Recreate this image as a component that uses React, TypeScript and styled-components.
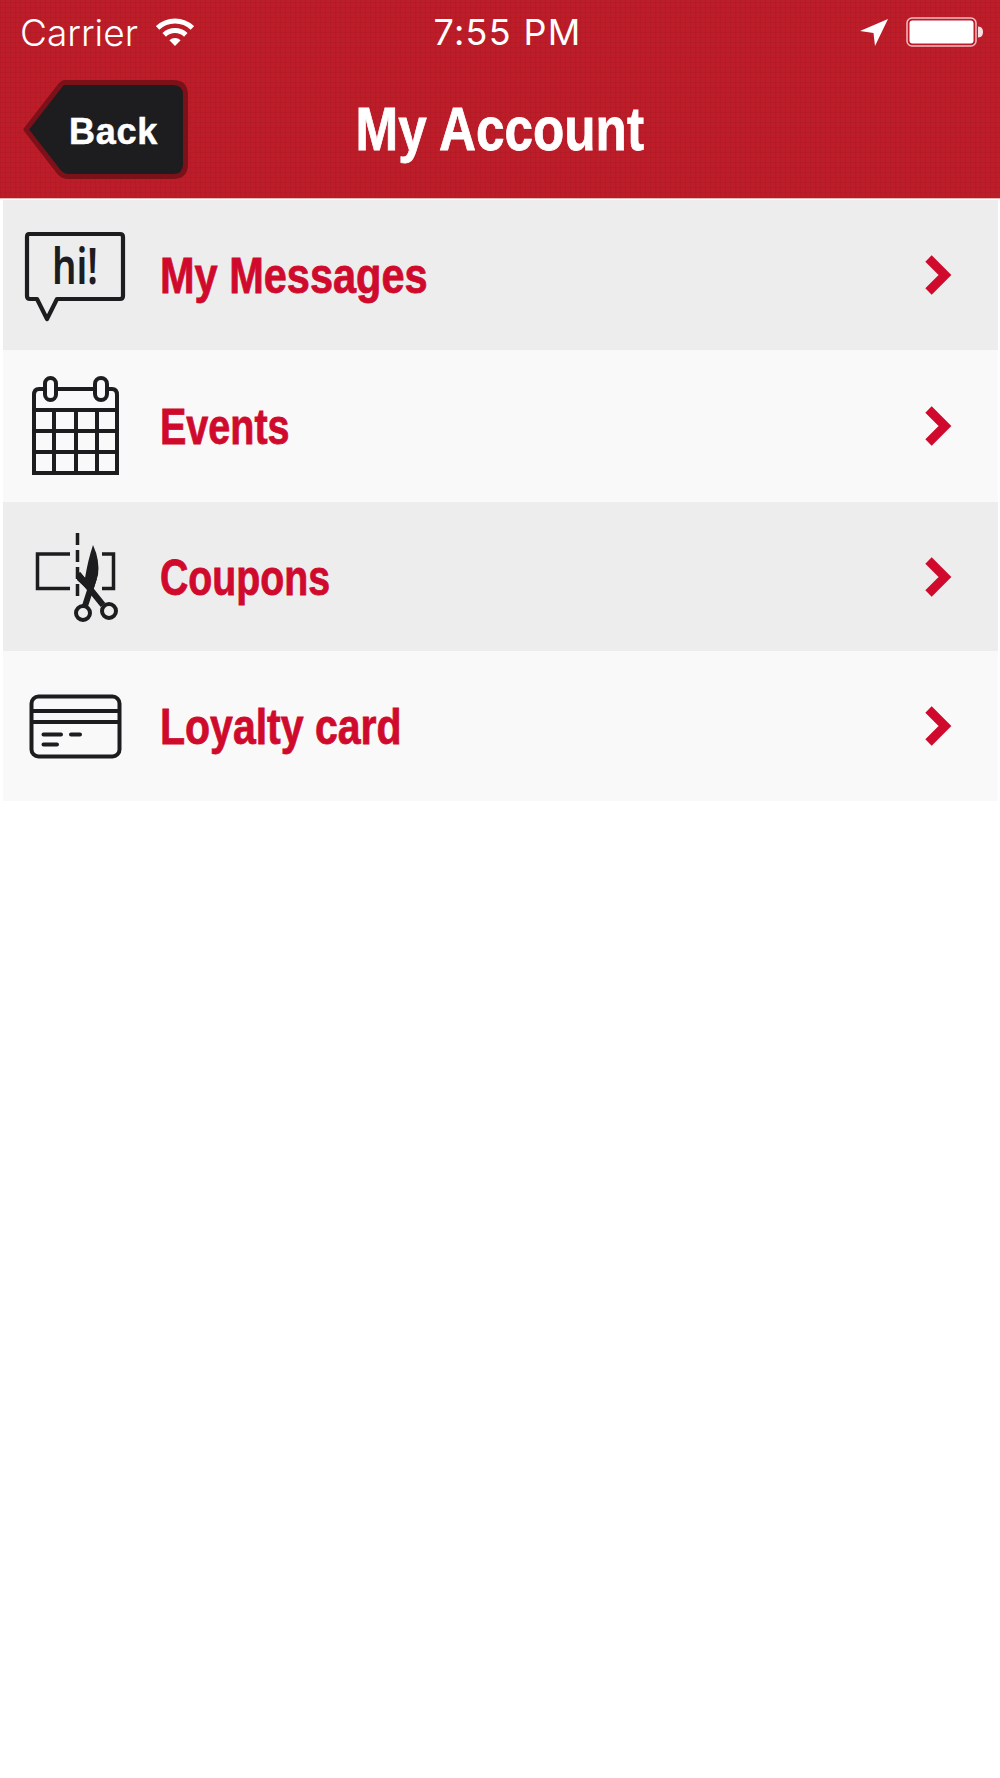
import React from "react";
import styled, { createGlobalStyle } from "styled-components";

const GlobalStyle = createGlobalStyle`
  html, body {
    margin: 0;
    padding: 0;
    background: #ffffff;
  }
`;

const Page = styled.div`
  width: 1000px;
  min-height: 1778px;
  background: #ffffff;
  font-family: "Liberation Sans", Arial, sans-serif;
`;

const Header = styled.header`
  height: 199px;
  box-sizing: border-box;
  border-bottom: 1px solid #e8b8bb;
  background-color: #bc1d29;
  background-image:
    repeating-linear-gradient(90deg, rgba(120, 10, 20, 0.09) 0 1px, transparent 1px 5px),
    repeating-linear-gradient(0deg, rgba(120, 10, 20, 0.09) 0 1px, transparent 1px 5px);
`;

const StatusBar = styled.div`
  height: 64px;
  display: grid;
  grid-template-columns: 1fr auto 1fr;
  align-items: center;
  padding: 0 17px 0 20px;
  color: #ffffff;
  font-family: Inter, "Liberation Sans", sans-serif;
`;

const StatusLeft = styled.div`
  display: flex;
  align-items: center;
  gap: 18px;
  font-size: 37px;
  font-weight: 300;
`;

const Clock = styled.div`
  margin-left: 12px;
  font-size: 36px;
  font-weight: 400;
  letter-spacing: 1.3px;
`;

const StatusRight = styled.div`
  display: flex;
  justify-content: flex-end;
  align-items: center;
  gap: 18px;
`;

const NavBar = styled.div`
  position: relative;
  height: 133px;
  display: flex;
  align-items: center;
  justify-content: center;
`;

const BackButton = styled.button`
  position: absolute;
  left: 23px;
  top: 15px;
  width: 165px;
  height: 101px;
  padding: 0;
  border: 0;
  background: none;
`;

const BackLabel = styled.span`
  position: absolute;
  left: 46px;
  top: 5px;
  right: 0;
  bottom: 0;
  display: flex;
  align-items: center;
  color: #ffffff;
  font-family: "Liberation Sans", sans-serif;
  font-size: 36px;
  font-weight: 700;
  letter-spacing: 0.7px;
  -webkit-text-stroke: 0.5px #ffffff;
`;

const Title = styled.h1`
  margin: 0 0 4px;
  color: #ffffff;
  font-family: "Liberation Sans", sans-serif;
  font-size: 61px;
  font-weight: 700;
  transform: scaleX(0.84);
  -webkit-text-stroke: 0.8px #ffffff;
`;

const Menu = styled.ul`
  list-style: none;
  margin: 1px 0 0;
  padding: 0 2px 0 3px;
`;

const Row = styled.li<{ $shaded: boolean; $height: number }>`
  height: ${({ $height }) => $height}px;
  display: flex;
  align-items: center;
  background: ${({ $shaded }) => ($shaded ? "#ededee" : "#f9f9fa")};
`;

const IconSlot = styled.div`
  width: 157px;
  flex: none;
  display: flex;
  color: #1d1d1f;
`;

const RowLabel = styled.span<{ $squeeze: number }>`
  flex: 1;
  padding-top: 2px;
  color: #cf0a2c;
  font-family: "Liberation Sans", sans-serif;
  font-size: 50px;
  font-weight: 700;
  transform: scaleX(${({ $squeeze }) => $squeeze});
  transform-origin: left center;
  -webkit-text-stroke: 0.8px #cf0a2c;
`;

const Chevron = styled.svg`
  width: 30px;
  height: 42px;
  margin-right: 45px;
`;

const Wifi = () => (
  <svg width="38" height="28" viewBox="0 0 38 28" fill="none" stroke="#fff" strokeWidth="5">
    <path d="M1.600 10 A25 25 0 0 1 36.400 10" />
    <path d="M8.200 16.900 A15.500 15.500 0 0 1 29.800 16.900" />
    <path d="M19 28 L13.400 22.300 A8 8 0 0 1 24.600 22.300 Z" fill="#fff" stroke="none" />
  </svg>
);

const LocationArrow = () => (
  <svg width="28" height="28" viewBox="0 0 28 28" fill="#fff">
    <path d="M28 1 L0 13 L13.500 15 L15 28 Z" />
  </svg>
);

const Battery = () => (
  <svg width="77" height="30" viewBox="0 0 77 30">
    <rect x="1" y="1" width="69" height="28" rx="5" fill="none" stroke="#f2bcc0" strokeWidth="1.500" />
    <rect x="3.500" y="3.500" width="64" height="23" rx="3" fill="#fff" />
    <path d="M72 9.500 C76 9.500 77 12.500 77 15 C77 17.500 76 20.500 72 20.500 Z" fill="#f8dfe1" />
  </svg>
);

const BackShape = () => (
  <svg width="165" height="101" viewBox="0 0 165 101">
    <path
      d="M42 3.500 H150 Q162.500 3.500 162.500 16 V85 Q162.500 97.500 150 97.500 H45 Q40 97.500 36 93 L3 50.500 L36 8 Q39 3.500 42 3.500 Z"
      fill="#1d1d20"
      stroke="#7d1119"
      strokeWidth="5"
      strokeLinejoin="round"
    />
  </svg>
);

// the row icons are drawn in page coordinates: the viewBox is the row's own box
const RowIcon = ({ top, height, children }: { top: number; height: number; children: React.ReactNode }) => (
  <svg width="157" height={height} viewBox={`3 ${top} 157 ${height}`} fill="none" stroke="currentColor">
    {children}
  </svg>
);

const MessageIcon = () => (
  <>
    <path
      d="M29 234 H120 Q123 234 123 237 V296 Q123 299 120 299 H57 L47 319 L37 299 H30 Q27 299 27 296 V237 Q27 234 29 234 Z"
      strokeWidth="4.200"
      strokeLinejoin="round"
    />
    <text
      x="52"
      y="284"
      fontFamily="'Noto Sans', sans-serif"
      fontSize="51"
      fontWeight="600"
      fill="currentColor"
      stroke="none"
      textLength="46"
      lengthAdjust="spacingAndGlyphs"
    >
      hi!
    </text>
  </>
);

const CalendarIcon = () => (
  <g strokeWidth="4">
    <path d="M44 389 H39 Q34 389 34 395 V473 H117 V395 Q117 389 112 389 H108 M56 389 H95" />
    <rect x="45" y="378" width="11" height="22" rx="5.500" />
    <rect x="95" y="378" width="12" height="22" rx="6" />
    <path d="M34 410 H117 M34 431 H117 M34 452 H117 M54 410 V473 M76 410 V473 M97 410 V473" />
  </g>
);

const CouponIcon = () => (
  <>
    <path d="M70 554 H37.500 V588.500 H70 M102 554 H113.500 V588.500 H102" strokeWidth="3.500" />
    <path d="M77.500 533 V600" strokeWidth="3.500" strokeDasharray="12 5" />
    <path d="M93 545 Q100 560 98 575 L92 594 L77 580 L77 570 L85 578 Q88 560 93 545 Z" fill="currentColor" stroke="none" />
    <path d="M78 574 L103 605 M94 578 L85 606" strokeWidth="6" />
    <circle cx="83" cy="613" r="7" strokeWidth="4" />
    <circle cx="109" cy="611" r="7" strokeWidth="4" />
  </>
);

const CardIcon = () => (
  <g strokeWidth="4" strokeLinecap="round">
    <rect x="31.500" y="696.500" width="88" height="60" rx="7" />
    <path d="M31.500 711 H119.500 M31.500 722 H119.500" strokeLinecap="butt" />
    <path d="M43.500 734.500 H61 M71 734.500 H80 M43.500 744.500 H57" />
  </g>
);

const items = [
  { label: "My Messages", top: 200, height: 150, squeeze: 0.83, icon: <MessageIcon /> },
  { label: "Events", top: 350, height: 152, squeeze: 0.79, icon: <CalendarIcon /> },
  { label: "Coupons", top: 502, height: 149, squeeze: 0.785, icon: <CouponIcon /> },
  { label: "Loyalty card", top: 651, height: 150, squeeze: 0.82, icon: <CardIcon /> },
];

export default function App() {
  return (
    <Page>
      <GlobalStyle />
      <Header>
        <StatusBar>
          <StatusLeft>
            <span>Carrier</span>
            <Wifi />
          </StatusLeft>
          <Clock>7:55 PM</Clock>
          <StatusRight>
            <LocationArrow />
            <Battery />
          </StatusRight>
        </StatusBar>
        <NavBar>
          <BackButton type="button">
            <BackShape />
            <BackLabel>Back</BackLabel>
          </BackButton>
          <Title>My Account</Title>
        </NavBar>
      </Header>
      <Menu>
        {items.map((item, i) => (
          <Row key={item.label} $shaded={i % 2 === 0} $height={item.height}>
            <IconSlot>
              <RowIcon top={item.top} height={item.height}>
                {item.icon}
              </RowIcon>
            </IconSlot>
            <RowLabel $squeeze={item.squeeze}>{item.label}</RowLabel>
            <Chevron viewBox="0 0 30 42" fill="none" stroke="#cf0a2c" strokeWidth="9">
              <path d="M5.500 4.500 L22 21 L5.500 37.500" />
            </Chevron>
          </Row>
        ))}
      </Menu>
    </Page>
  );
}
